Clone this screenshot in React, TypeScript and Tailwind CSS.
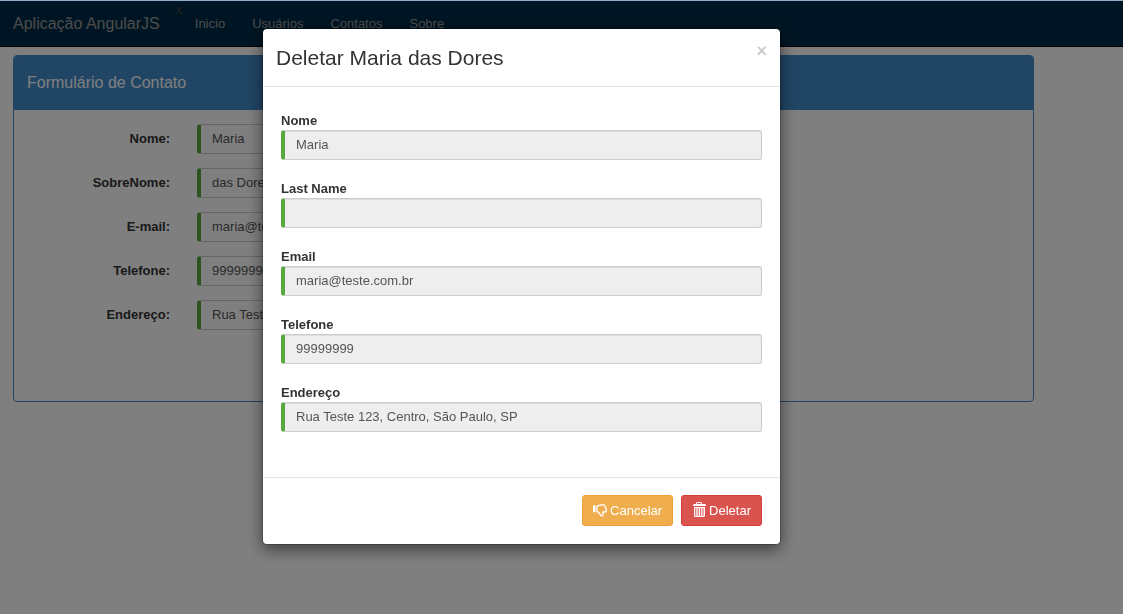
import React from "react";

type Field = { id: string; label: string; value: string };

const navItems = ["Inicio", "Usuários", "Contatos", "Sobre"];

const contactFields: Field[] = [
  { id: "nome", label: "Nome:", value: "Maria" },
  { id: "sobrenome", label: "SobreNome:", value: "das Dores" },
  { id: "email", label: "E-mail:", value: "maria@teste.com.br" },
  { id: "telefone", label: "Telefone:", value: "99999999" },
  { id: "endereco", label: "Endereço:", value: "Rua Teste 123, Centro, São Paulo, SP" },
];

const modalFields: Field[] = [
  { id: "m-nome", label: "Nome", value: "Maria" },
  { id: "m-lastname", label: "Last Name", value: "" },
  { id: "m-email", label: "Email", value: "maria@teste.com.br" },
  { id: "m-telefone", label: "Telefone", value: "99999999" },
  { id: "m-endereco", label: "Endereço", value: "Rua Teste 123, Centro, São Paulo, SP" },
];

const inputClass =
  "block h-[30px] w-full rounded-[3px] border border-l-4 border-[#cccccc] border-l-[#57a83f] px-[11px] pb-px text-[13px] leading-5 text-[#555555] outline-none";

function ThumbsDownIcon() {
  return (
    <svg width="14" height="14" viewBox="0 0 14 14" aria-hidden="true">
      <path d="M0 1.4h2.6v6.8H0z" fill="currentColor" />
      <path
        d="M4 7.6V2.4L5.6 1.4h1.6l.6-.6h3.4l2 4v2.4l-.9.8H9.7l.4 2.2c0 1-.6 1.8-1.6 2L6 8.8z"
        fill="none"
        stroke="currentColor"
        strokeWidth="1.3"
        strokeLinejoin="round"
      />
    </svg>
  );
}

function TrashIcon() {
  return (
    <svg width="14" height="15" viewBox="0 0 14 15" className="-mt-0.5" aria-hidden="true">
      <path
        fillRule="evenodd"
        fill="currentColor"
        d="M4 2V1l1-1h4l1 1v1h3l1 1v1H1V3l1-1zM5 2h4V1H5zM2 5h11v9l-1 1H3l-1-1zM3.3 6v8h1V6zM5.7 6v8h1V6zM8.1 6v8h1V6zM10.5 6v8h1V6z"
      />
    </svg>
  );
}

function Navbar() {
  return (
    <nav className="flex h-[46px] items-center border-b border-black bg-[#002b47] pl-[13px]">
      <a href="#" className="text-base text-[#999999]">
        Aplicação AngularJS
      </a>
      <span className="-mt-7 ml-4 mr-[11px] w-2 text-[13px] leading-3 text-[#444444]">x</span>
      <ul className="flex gap-[27px] text-[13px] text-[#999999]">
        {navItems.map((item) => (
          <li key={item}>
            <a href="#">{item}</a>
          </li>
        ))}
      </ul>
    </nav>
  );
}

function ContactPanel() {
  return (
    <section className="overflow-hidden rounded-[4px] border border-[#428bca] bg-white">
      <h2 className="bg-[#428bca] px-[13px] pb-[15px] pt-[14px] text-base leading-[25px] text-white">
        Formulário de Contato
      </h2>
      <form className="flex flex-col gap-[14px] pb-[71px] pt-[14px]">
        {contactFields.map((f) => (
          <div key={f.id} className="flex items-center gap-[27px]">
            <label htmlFor={f.id} className="w-[156px] text-right text-[13px] font-bold leading-5">
              {f.label}
            </label>
            <div className="w-1/2">
              <input id={f.id} defaultValue={f.value} className={inputClass} />
            </div>
          </div>
        ))}
      </form>
    </section>
  );
}

function DeleteModal() {
  return (
    <div
      role="dialog"
      aria-modal="true"
      aria-labelledby="modal-title"
      className="w-full max-w-[519px] rounded-[5px] border border-black/20 bg-white bg-clip-padding shadow-[0_5px_15px_rgba(0,0,0,0.5)]"
    >
      <header className="flex items-start justify-between border-b border-[#e5e5e5] px-[13px] pb-[13px] pt-[14px]">
        <h1 id="modal-title" className="text-[21px] leading-[30px]">
          Deletar Maria das Dores
        </h1>
        <button
          type="button"
          aria-label="Fechar"
          className="text-[18px] font-bold leading-4 text-[#cccccc]"
        >
          ×
        </button>
      </header>
      <form className="flex flex-col gap-[18px] px-[18px] pb-[45px] pt-[23px]">
        {modalFields.map((f) => (
          <div key={f.id}>
            <label htmlFor={f.id} className="block pt-0.5 text-[13px] font-bold leading-[18px]">
              {f.label}
            </label>
            <input
              id={f.id}
              readOnly
              defaultValue={f.value}
              className={inputClass + " bg-[#eeeeee] shadow-[inset_0_1px_1px_rgba(0,0,0,0.075)]"}
            />
          </div>
        ))}
      </form>
      <footer className="flex justify-end gap-2 border-t border-[#e5e5e5] px-[18px] pb-[18px] pt-[17px]">
        <button
          type="button"
          className="flex h-[31px] items-center gap-[3px] rounded-[3px] border border-[#eea236] bg-[#f0ad4e] px-[10px] text-[13px] text-white"
        >
          <ThumbsDownIcon />
          Cancelar
        </button>
        <button
          type="button"
          className="flex h-[31px] items-center gap-[3px] rounded-[3px] border border-[#d43f3a] bg-[#d9534f] px-[10px] text-[13px] text-white"
        >
          <TrashIcon />
          Deletar
        </button>
      </footer>
    </div>
  );
}

export default function App() {
  return (
    <div className="min-h-screen bg-white font-['Liberation_Sans',Arial,sans-serif] text-[#333333]">
      <div className="pt-px">
        <Navbar />
        <main className="max-w-[1043px] pb-4 pl-[13px] pr-[9px] pt-2">
          <ContactPanel />
        </main>
      </div>
      <div className="fixed inset-0 overflow-y-auto border-t border-[#91b1cb] bg-black/50">
        <div className="flex max-w-[1043px] justify-center py-[27px]">
          <DeleteModal />
        </div>
      </div>
    </div>
  );
}
